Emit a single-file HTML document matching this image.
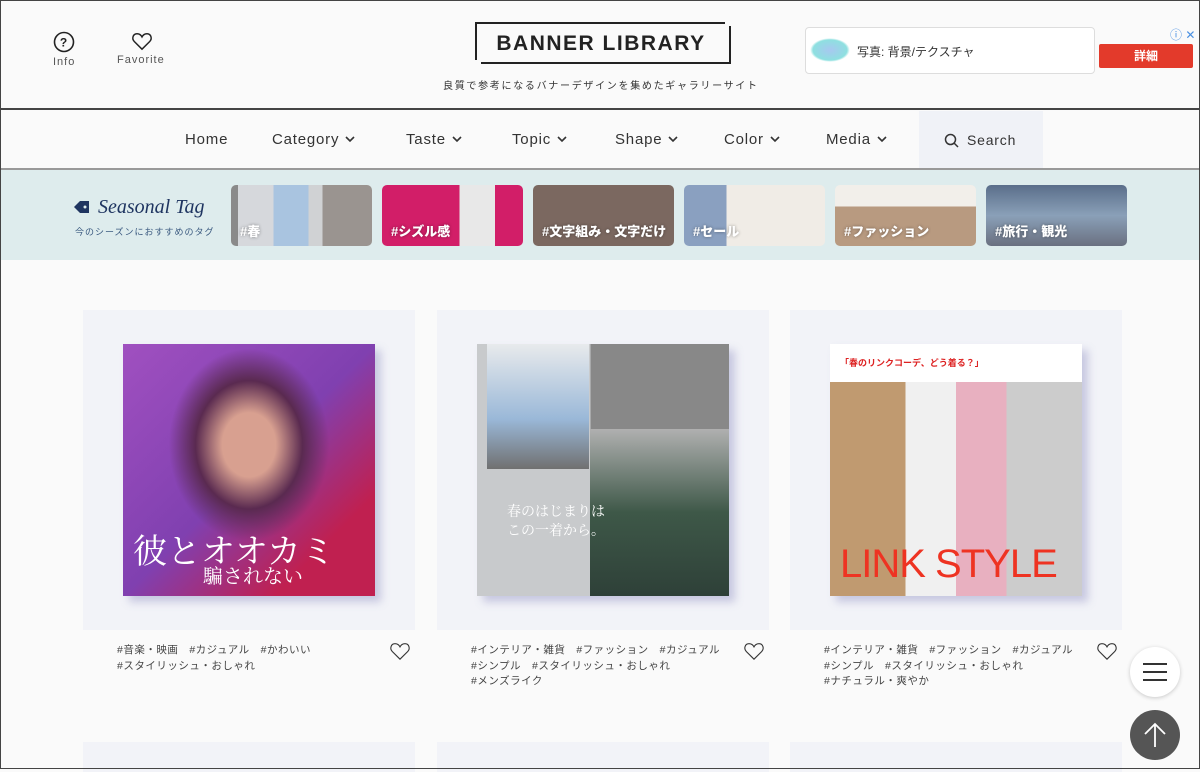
<!DOCTYPE html>
<html><head><meta charset="utf-8"><style>
*{box-sizing:border-box;margin:0;padding:0}
body{width:1200px;height:769px;overflow:hidden;background:#fafafa;font-family:"Liberation Sans","Noto Sans CJK JP",sans-serif;color:#333;position:relative}
.frame{position:absolute;inset:0;border:1px solid #444;pointer-events:none;z-index:10}
.hdr{position:absolute;left:0;top:0;width:1200px;height:110px;border-bottom:2px solid #444;background:#fafafa}
.ic{position:absolute;top:31px;text-align:center;font-size:11px;color:#555;letter-spacing:1px}
.logo{position:absolute;left:475px;top:22px;width:256px;height:42px;}
.logo .t{position:absolute;left:0;top:0;width:250px;height:38px;border-left:2px solid #222;border-top:2px solid #222;text-align:center;line-height:40px;font-weight:bold;font-size:21px;letter-spacing:1.5px;color:#222}
.logo .b{position:absolute;left:6px;top:4px;width:250px;height:38px;border-right:2px solid #222;border-bottom:2px solid #222}
.sub{position:absolute;left:443px;top:77px;font-size:10px;letter-spacing:1.7px;color:#333}
.ad{position:absolute;left:805px;top:27px;width:290px;height:47px;background:#fff;border:1px solid #ddd;border-radius:4px;font-size:12px;color:#333}
.ad .blob{position:absolute;left:4px;top:10px;width:40px;height:24px;border-radius:50%;background:radial-gradient(#a8c8f0,#8ee0e0 60%,transparent 70%)}
.btn{position:absolute;left:1099px;top:44px;width:94px;height:24px;background:#e33a2b;color:#fff;font-size:12px;font-weight:bold;text-align:center;line-height:24px;border-radius:2px}
.nav{position:absolute;left:0;top:111px;width:1200px;height:59px;border-bottom:2px solid #999;background:#fafafa}
.nav span{position:absolute;top:20px;font-size:15px;letter-spacing:.8px;color:#333;white-space:nowrap}
.nav span svg{margin-left:6px;vertical-align:1px}
.srch{position:absolute;left:919px;top:0;width:124px;height:57px;background:#f0f2f7}
.band{position:absolute;left:0;top:170px;width:1200px;height:90px;background:#deeced}
.st{position:absolute;left:98px;top:196px;font-family:"Liberation Serif",serif;font-style:italic;font-size:20px;color:#1f3561}
.stsub{position:absolute;left:75px;top:225px;font-size:9px;color:#3b5a80;letter-spacing:1px}
.tag{position:absolute;top:185px;width:141px;height:61px;border-radius:5px;overflow:hidden;color:#fff;font-weight:bold;font-size:13px}
.tag b{position:absolute;left:9px;bottom:6px;text-shadow:0 0 3px rgba(0,0,0,.4)}
.card{position:absolute;top:310px;width:332px;height:320px;background:#f2f3f8}
.img{position:absolute;left:40px;top:34px;width:252px;height:252px;box-shadow:6px 6px 8px rgba(120,120,180,.35);overflow:hidden}
.tags{position:absolute;top:643px;font-size:10.5px;line-height:15.5px;color:#444;letter-spacing:.5px;width:280px}
.heart{position:absolute;top:641px}
.next{position:absolute;top:742px;width:332px;height:30px;background:#f2f3f8}
</style></head><body>
<div class="hdr">
 <div class="ic" style="left:53px"><svg width="22" height="22" viewBox="0 0 22 22"><circle cx="11" cy="11" r="9.5" fill="none" stroke="#222" stroke-width="1.6"/><text x="11" y="15.5" text-anchor="middle" font-size="12" font-weight="bold" fill="#222" font-family="Liberation Sans">?</text></svg><div>Info</div></div>
 <div class="ic" style="left:117px"><svg width="22" height="20" viewBox="0 0 24 22" style="margin-left:2px"><path d="M12 20 L3.5 11.5 C0.5 8.5 2 3 6.5 3 C9 3 11 4.5 12 6.5 C13 4.5 15 3 17.5 3 C22 3 23.5 8.5 20.5 11.5 Z" fill="none" stroke="#222" stroke-width="1.6"/></svg><div>Favorite</div></div>
 <div class="logo"><div class="b"></div><div class="t">BANNER LIBRARY</div></div>
 <div class="sub">良質で参考になるバナーデザインを集めたギャラリーサイト</div>
 <div class="ad"><div class="blob"></div><div style="position:absolute;left:51px;top:15px">写真: 背景/テクスチャ</div></div>
 <div style="position:absolute;left:1170px;top:26px;font-size:12px;color:#4a90e2">ⓘ ✕</div>
 <div class="btn">詳細</div>
</div>
<div class="nav">
 <span style="left:185px">Home</span>
 <span style="left:272px">Category<svg width="10" height="7" viewBox="0 0 10 7"><path d="M1 1 L5 5 L9 1" fill="none" stroke="#333" stroke-width="1.6"/></svg></span>
 <span style="left:406px">Taste<svg width="10" height="7" viewBox="0 0 10 7"><path d="M1 1 L5 5 L9 1" fill="none" stroke="#333" stroke-width="1.6"/></svg></span>
 <span style="left:512px">Topic<svg width="10" height="7" viewBox="0 0 10 7"><path d="M1 1 L5 5 L9 1" fill="none" stroke="#333" stroke-width="1.6"/></svg></span>
 <span style="left:615px">Shape<svg width="10" height="7" viewBox="0 0 10 7"><path d="M1 1 L5 5 L9 1" fill="none" stroke="#333" stroke-width="1.6"/></svg></span>
 <span style="left:724px">Color<svg width="10" height="7" viewBox="0 0 10 7"><path d="M1 1 L5 5 L9 1" fill="none" stroke="#333" stroke-width="1.6"/></svg></span>
 <span style="left:826px">Media<svg width="10" height="7" viewBox="0 0 10 7"><path d="M1 1 L5 5 L9 1" fill="none" stroke="#333" stroke-width="1.6"/></svg></span>
 <div class="srch"><svg style="position:absolute;left:25px;top:22px" width="15" height="15" viewBox="0 0 15 15"><circle cx="6.5" cy="6.5" r="5" fill="none" stroke="#333" stroke-width="1.5"/><path d="M10 10 L14 14" stroke="#333" stroke-width="1.5"/></svg><span style="left:48px;top:21px;font-size:14px">Search</span></div>
</div>
<div class="band">
</div>
<svg style="position:absolute;left:73px;top:200px" width="18" height="14" viewBox="0 0 18 14"><path d="M1 7 L7 1 H16 V13 H7 Z" fill="#1f3561"/><circle cx="12" cy="7" r="1.5" fill="#deeced"/></svg>
<div class="st">Seasonal Tag</div>
<div class="stsub">今のシーズンにおすすめのタグ</div>
<div class="tag" style="left:231px;background:linear-gradient(90deg,#8a8a8a 0 5%,#d6d8dc 5% 30%,#a9c4e0 30% 55%,#d0d2d4 55% 65%,#9a9490 65%)"><b>#春</b></div>
<div class="tag" style="left:382px;background:linear-gradient(90deg,#d21e68 0 55%,#e8e8e8 55% 80%,#d21e68 80%)"><b>#シズル感</b></div>
<div class="tag" style="left:533px;background:#7b6860"><b>#文字組み・文字だけ</b></div>
<div class="tag" style="left:684px;background:linear-gradient(90deg,#8aa0c0 0 30%,#f0ece6 30%)"><b>#セール</b></div>
<div class="tag" style="left:835px;background:linear-gradient(180deg,#f2efea 0 35%,#b89a80 35%)"><b>#ファッション</b></div>
<div class="tag" style="left:986px;background:linear-gradient(180deg,#5a6e8a,#8aa0b8 50%,#6a7080)"><b>#旅行・観光</b></div>

<div class="card" style="left:83px"><div class="img" style="background:radial-gradient(ellipse at 50% 40%,#d8a090 0 15%,#5a2a50 30%,transparent 45%),linear-gradient(135deg,#a050c0,#8040b0 50%,#c02050 80%)"><div style="position:absolute;left:10px;top:180px;color:#fff;font-family:'Noto Serif CJK SC',serif;font-size:34px;white-space:nowrap">彼とオオカミ</div><div style="position:absolute;left:80px;top:216px;color:#fff;font-family:'Noto Serif CJK SC',serif;font-size:20px;white-space:nowrap">騙されない</div></div></div>
<div class="card" style="left:437px"><div class="img" style="background:linear-gradient(90deg,#c8cacc 0 45%,#888 45%)"><div style="position:absolute;left:10px;top:0;width:102px;height:125px;background:linear-gradient(#e8eaec,#9ab8d8 60%,#707070)"></div><div style="position:absolute;left:113px;top:85px;width:139px;height:167px;background:linear-gradient(#b0b0b0,#3e5848 50%,#2e4038)"></div><div style="position:absolute;left:30px;top:158px;color:#fff;font-family:'Noto Serif CJK SC',serif;font-size:14px;line-height:19px">春のはじまりは<br>この一着から。</div></div></div>
<div class="card" style="left:790px"><div class="img" style="background:#fff"><div style="position:absolute;left:10px;top:12px;font-size:9px;color:#d22;font-weight:bold">「春のリンクコーデ、どう着る？」</div><div style="position:absolute;left:0;top:38px;width:252px;height:214px;background:linear-gradient(90deg,#c09a70 0 30%,#f0f0f0 30% 50%,#e8b0c0 50% 70%,#ccc 70%)"></div><div style="position:absolute;left:10px;top:196px;color:#e32;font-size:40px;line-height:48px;font-family:'Liberation Sans';white-space:nowrap;letter-spacing:-1px">LINK STYLE</div></div></div>

<div class="tags" style="left:117px">#音楽・映画　#カジュアル　#かわいい<br>#スタイリッシュ・おしゃれ</div>
<div class="tags" style="left:471px">#インテリア・雑貨　#ファッション　#カジュアル<br>#シンプル　#スタイリッシュ・おしゃれ<br>#メンズライク</div>
<div class="tags" style="left:824px">#インテリア・雑貨　#ファッション　#カジュアル<br>#シンプル　#スタイリッシュ・おしゃれ<br>#ナチュラル・爽やか</div>
<svg class="heart" style="left:389px" width="22" height="20" viewBox="0 0 24 22"><path d="M12 20 L3.5 11.5 C0.5 8.5 2 3 6.5 3 C9 3 11 4.5 12 6.5 C13 4.5 15 3 17.5 3 C22 3 23.5 8.5 20.5 11.5 Z" fill="none" stroke="#333" stroke-width="1.2"/></svg>
<svg class="heart" style="left:743px" width="22" height="20" viewBox="0 0 24 22"><path d="M12 20 L3.5 11.5 C0.5 8.5 2 3 6.5 3 C9 3 11 4.5 12 6.5 C13 4.5 15 3 17.5 3 C22 3 23.5 8.5 20.5 11.5 Z" fill="none" stroke="#333" stroke-width="1.2"/></svg>
<svg class="heart" style="left:1096px" width="22" height="20" viewBox="0 0 24 22"><path d="M12 20 L3.5 11.5 C0.5 8.5 2 3 6.5 3 C9 3 11 4.5 12 6.5 C13 4.5 15 3 17.5 3 C22 3 23.5 8.5 20.5 11.5 Z" fill="none" stroke="#333" stroke-width="1.2"/></svg>

<div class="next" style="left:83px"></div><div class="next" style="left:437px"></div><div class="next" style="left:790px"></div>

<div style="position:absolute;left:1130px;top:647px;width:50px;height:50px;border-radius:50%;background:#fff;box-shadow:0 1px 4px rgba(0,0,0,.2)"><div style="position:absolute;left:13px;top:16px;width:24px;height:2px;background:#333;box-shadow:0 8px 0 #333,0 16px 0 #333"></div></div>
<div style="position:absolute;left:1130px;top:710px;width:50px;height:50px;border-radius:50%;background:#555"><svg width="50" height="50" viewBox="0 0 50 50"><path d="M25 37 V14 M15 24 L25 14 L35 24" fill="none" stroke="#fff" stroke-width="1.8"/></svg></div>
<div class="frame"></div>
</body></html>
